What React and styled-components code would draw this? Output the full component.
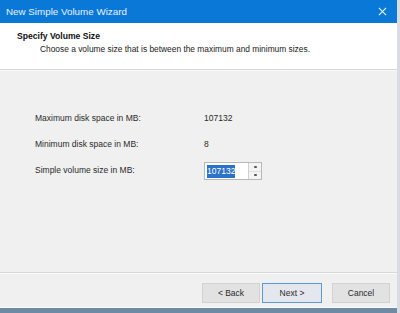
import React from "react";
import styled, { createGlobalStyle } from "styled-components";

const GlobalStyle = createGlobalStyle`
  html, body {
    margin: 0;
    padding: 0;
    background: #f0f0f0;
  }
  body {
    font-family: "Liberation Sans", Arial, sans-serif;
    color: #1a1a1a;
  }
`;

const Window = styled.div`
  width: 400px;
  height: 313px;
  display: flex;
  flex-direction: column;
  background: #f0f0f0;
  box-sizing: border-box;
  border-right: 3px solid #d9dde3;
  overflow: hidden;
`;

const TitleBar = styled.div`
  height: 23px;
  flex-shrink: 0;
  background: #0a78d6;
  display: flex;
  align-items: center;
  justify-content: space-between;
  padding: 0 10px 0 6px;
  color: #e8f2fc;
  font-size: 9.8px;
`;

const CloseIcon = styled.svg`
  width: 9px;
  height: 9px;
`;

const Header = styled.div`
  height: 47px;
  flex-shrink: 0;
  background: #ffffff;
  border-bottom: 1px solid #d5d5d5;
  box-shadow: 0 1px 0 #fafafa;
  padding: 8px 0 0 17px;
  box-sizing: border-box;
`;

const HeaderTitle = styled.div`
  font-weight: bold;
  font-size: 8.6px;
  color: #111;
`;

const HeaderText = styled.div`
  font-size: 8.4px;
  color: #222;
  margin: 3px 0 0 23px;
`;

const Body = styled.div`
  flex: 1;
  padding: 42px 0 0 35px;
  display: flex;
  flex-direction: column;
  gap: 14px;
  border-bottom: 1px solid #d7d7d7;
`;

const Row = styled.div`
  display: flex;
  align-items: center;
  height: 12px;
  font-size: 8.5px;
  color: #2a2a2a;
`;

const Label = styled.div`
  width: 169px;
`;

const Spin = styled.div`
  display: flex;
  height: 18px;
  box-sizing: border-box;
  border: 1px solid #b8b8b8;
  background: #fff;
  margin-top: 2px;
`;

const Field = styled.div`
  width: 41px;
  display: flex;
  align-items: center;
  padding-left: 2px;
`;

const Selected = styled.span`
  background: #2b72c9;
  color: #fff;
  padding: 1px 0;
  line-height: 11px;
`;

const SpinButtons = styled.div`
  width: 12px;
  display: flex;
  flex-direction: column;
  border-left: 1px solid #d0d0d0;
`;

const SpinArrow = styled.div`
  flex: 1;
  display: flex;
  align-items: center;
  justify-content: center;
  background: #f4f4f4;
  & + & {
    border-top: 1px solid #e0e0e0;
  }
`;

const Dot = styled.div`
  width: 3px;
  height: 2px;
  background: #555;
  border-radius: 1px;
`;

const Footer = styled.div`
  height: 34px;
  flex-shrink: 0;
  box-sizing: border-box;
  display: flex;
  justify-content: flex-end;
  align-items: flex-start;
  padding: 9px 7px 0 0;
  border-top: 1px solid #fbfbfb;
`;

const Button = styled.button`
  width: ${(p) => (p.$next ? 60 : 58)}px;
  height: 20px;
  box-sizing: border-box;
  margin-left: ${(p) => (p.$gap ? 10 : 2)}px;
  background: ${(p) => (p.$next ? "#e4e8ee" : "#e2e2e2")};
  border: 1px solid ${(p) => (p.$next ? "#5a9ad6" : "#d2d2d2")};
  font-family: "Liberation Sans", Arial, sans-serif;
  font-size: 8.5px;
  color: #2a2a2a;
  padding: 0;
`;

const Taskbar = styled.div`
  height: 5px;
  flex-shrink: 0;
  border-top: 1px solid #f8fbfd;
  background: #6f8aa3;
`;

export default function App() {
  return (
    <Window>
      <GlobalStyle />
      <TitleBar>
        <span>New Simple Volume Wizard</span>
        <CloseIcon viewBox="0 0 10 10">
          <path d="M1 1 L9 9 M9 1 L1 9" stroke="#e8f2fc" strokeWidth="1.3" />
        </CloseIcon>
      </TitleBar>
      <Header>
        <HeaderTitle>Specify Volume Size</HeaderTitle>
        <HeaderText>
          Choose a volume size that is between the maximum and minimum sizes.
        </HeaderText>
      </Header>
      <Body>
        <Row>
          <Label>Maximum disk space in MB:</Label>
          <span>107132</span>
        </Row>
        <Row>
          <Label>Minimum disk space in MB:</Label>
          <span>8</span>
        </Row>
        <Row>
          <Label>Simple volume size in MB:</Label>
          <Spin>
            <Field>
              <Selected>107132</Selected>
            </Field>
            <SpinButtons>
              <SpinArrow>
                <Dot />
              </SpinArrow>
              <SpinArrow>
                <Dot />
              </SpinArrow>
            </SpinButtons>
          </Spin>
        </Row>
      </Body>
      <Footer>
        <Button>&lt; Back</Button>
        <Button $next>Next &gt;</Button>
        <Button $gap>Cancel</Button>
      </Footer>
      <Taskbar />
    </Window>
  );
}
